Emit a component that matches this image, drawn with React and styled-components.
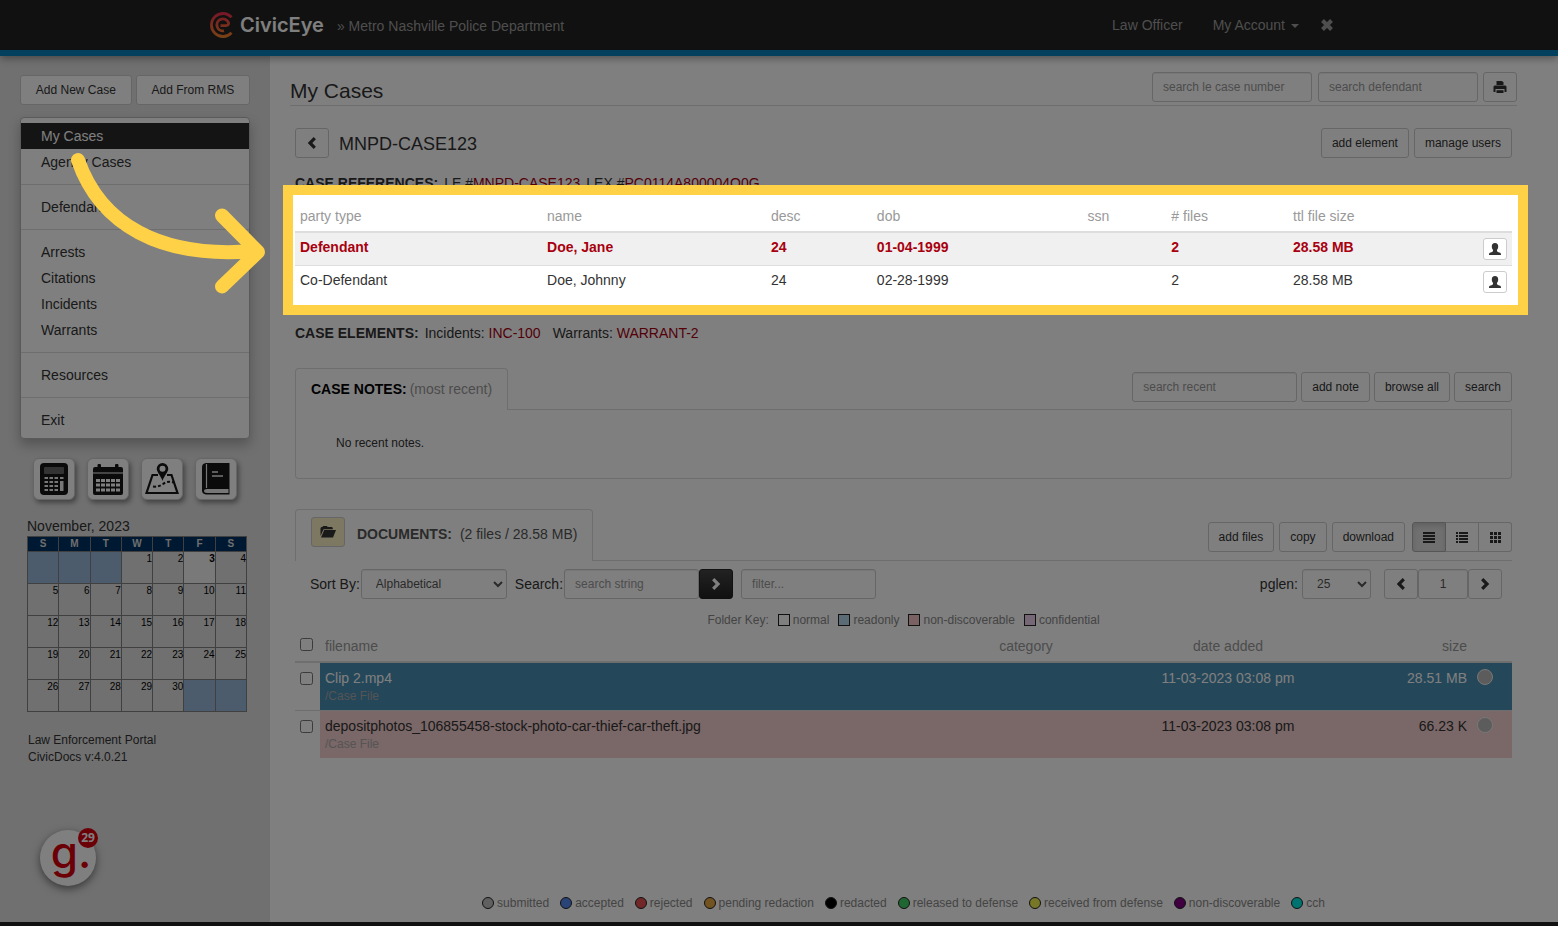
import React from "react";
import styled, { createGlobalStyle } from "styled-components";

const GlobalStyle = createGlobalStyle`
  *, *::before {
    box-sizing: border-box;
  }
  body {
    margin: 0;
    background: #fff;
    color: #333;
    font-family: "Liberation Sans", Arial, sans-serif;
    font-size: 14px;
    line-height: 20px;
  }
  button, input, select {
    font-family: inherit;
  }
`;

// data
const menuGroups = [
  ["My Cases", "Agency Cases"],
  ["Defendants"],
  ["Arrests", "Citations", "Incidents", "Warrants"],
  ["Resources"],
  ["Exit"],
];

const weekDays = ["S", "M", "T", "W", "T", "F", "S"];

const weeks = [
  [null, null, null, 1, 2, 3, 4],
  [5, 6, 7, 8, 9, 10, 11],
  [12, 13, 14, 15, 16, 17, 18],
  [19, 20, 21, 22, 23, 24, 25],
  [26, 27, 28, 29, 30, null, null],
];

const parties = [
  {
    type: "Defendant",
    name: "Doe, Jane",
    desc: "24",
    dob: "01-04-1999",
    files: 2,
    size: "28.58 MB",
    active: true,
  },
  {
    type: "Co-Defendant",
    name: "Doe, Johnny",
    desc: "24",
    dob: "02-28-1999",
    files: 2,
    size: "28.58 MB",
  },
];

const files = [
  {
    name: "Clip 2.mp4",
    path: "/Case File",
    added: "11-03-2023 03:08 pm",
    size: "28.51 MB",
    selected: true,
  },
  {
    name: "depositphotos_106855458-stock-photo-car-thief-car-theft.jpg",
    path: "/Case File",
    added: "11-03-2023 03:08 pm",
    size: "66.23 K",
  },
];

const folderKeys = [
  { label: "normal", color: "#fff" },
  { label: "readonly", color: "#b8d8ee" },
  { label: "non-discoverable", color: "#f4c4c4" },
  { label: "confidential", color: "#ecd0ec" },
];

const statuses = [
  { label: "submitted", color: "#c0c0c0" },
  { label: "accepted", color: "#5588ee" },
  { label: "rejected", color: "#e45050" },
  { label: "pending redaction", color: "#e6a640" },
  { label: "redacted", color: "#000" },
  { label: "released to defense", color: "#40cc66" },
  { label: "received from defense", color: "#eeee50" },
  { label: "non-discoverable", color: "#800080" },
  { label: "cch", color: "#00e6e0" },
];

// icons and svg
const Chevron = ({ right }) => (
  <svg width="12" height="12" viewBox="0 0 12 12" aria-hidden="true">
    <path
      d={right ? "M3.2 1.2 8 6l-4.8 4.8" : "M8.8 1.2 4 6l4.8 4.8"}
      fill="none"
      stroke="currentColor"
      strokeWidth="3.2"
    />
  </svg>
);

const PrintIcon = () => (
  <svg width="14" height="13" viewBox="0 0 14 13" fill="currentColor" aria-hidden="true">
    <path d="M4 0h5l1.5 1.5V4h-7V.5z" />
    <path d="M1.500 4.500h11l1 1V11h-2V8h-9v3h-2V5.500z" />
    <path d="M3.500 9.200h7V12h-7z" />
  </svg>
);

const CloseIcon = () => (
  <svg width="14" height="14" viewBox="0 0 14 14" aria-hidden="true">
    <path d="m2.500 2.500 9 9m0-9-9 9" stroke="currentColor" strokeWidth="4" />
  </svg>
);

const UserIcon = () => (
  <svg width="12" height="12" viewBox="0 0 12 12" fill="currentColor" aria-hidden="true">
    <path d="M6 0c2.200 0 3.200 1.300 3.200 3.200 0 1.700-.5 2.800-1.200 3.600-.2 1.200.1 1.800.9 2.200l2.200.8c.7.400.9.900.9 2.200H0c0-1.300.2-1.800.9-2.200L3.100 9c.8-.4 1.100-1 .9-2.200C3.300 6 2.800 4.900 2.800 3.200 2.800 1.300 3.800 0 6 0z" />
  </svg>
);

const FolderIcon = () => (
  <svg width="16" height="12" viewBox="0 0 16 12" fill="currentColor" aria-hidden="true">
    <path d="M.5 10V2l1-1h1L3 0h4l.6 1H12l.8 1v1.200H3.500z" />
    <path d="M4.200 4H16l-3 7.500H1z" />
  </svg>
);

const JustifyIcon = () => (
  <svg width="12" height="11" viewBox="0 0 12 11" fill="currentColor" aria-hidden="true">
    <path d="M0 0h12v2H0zM0 3h12v2H0zM0 6h12v2H0zM0 9h12v2H0z" />
  </svg>
);

const ListIcon = () => (
  <svg width="12" height="11" viewBox="0 0 12 11" fill="currentColor" aria-hidden="true">
    <path d="M0 0h2v2H0zM0 3h2v2H0zM0 6h2v2H0zM0 9h2v2H0zM3 0h9v2H3zM3 3h9v2H3zM3 6h9v2H3zM3 9h9v2H3z" />
  </svg>
);

const GridIcon = () => (
  <svg width="11" height="11" viewBox="0 0 11 11" fill="currentColor" aria-hidden="true">
    <path d="M0 0h3v3H0zM4 0h3v3H4zM8 0h3v3H8zM0 4h3v3H0zM4 4h3v3H4zM8 4h3v3H8zM0 8h3v3H0zM4 8h3v3H4zM8 8h3v3H8z" />
  </svg>
);

const LogoMark = () => (
  <svg width="26" height="28" viewBox="0 0 26 28" fill="none" aria-hidden="true">
    <defs>
      <linearGradient id="mark" x1="0" y1="0" x2="0" y2="28" gradientUnits="userSpaceOnUse">
        <stop offset="0" stopColor="#f02850" />
        <stop offset="1" stopColor="#f08a28" />
      </linearGradient>
    </defs>
    <g stroke="url(#mark)" strokeWidth="2.800">
      <path d="M22.500 6.300A11.500 11.500 0 1 0 22.500 21.700" />
      <path d="M11.500 14.600H17c3 0 3-2.400 1.800-4.200A6 6 0 1 0 15 19.800" />
    </g>
  </svg>
);

const CalculatorIcon = () => (
  <svg width="28" height="32" viewBox="0 0 28 32" aria-hidden="true">
    <rect width="28" height="32" rx="4" fill="#161616" />
    <rect x="4" y="4" width="20" height="7" rx="1" fill="#666" />
    <path
      fill="#eee"
      d="M4.500 14h3.500v2H4.500zM9.500 14h3.500v2H9.500zM14.500 14h3.500v2h-3.500zM20 14h3.500v2H20zM4.500 18h3.500v2H4.500zM9.500 18h3.500v2H9.500zM14.500 18h3.500v2h-3.500zM4.500 22h3.500v2H4.500zM9.500 22h3.500v2H9.500zM14.500 22h3.500v2h-3.500zM4.500 26h3.500v2H4.500zM9.500 26h3.500v2H9.500zM14.500 26h3.500v2h-3.500zM20 18h3.500v10H20z"
    />
  </svg>
);

const CalendarIcon = () => (
  <svg width="30" height="31" viewBox="0 0 30 31" fill="#161616" aria-hidden="true">
    <path d="M2 3h2.500V1.500A1.500 1.500 0 0 1 8 1.500V3h14V1.500a1.500 1.500 0 0 1 3.500 0V3H28q2 0 2 2v3.500H0V5q0-2 2-2z" />
    <path
      fillRule="evenodd"
      d="M0 9.500h30V29q0 2-2 2H2q-2 0-2-2zM3 15v3h4v-3zM8 15v3h4v-3zM13 15v3h4v-3zM18 15v3h4v-3zM23 15v3h4v-3zM3 19.500v3h4v-3zM8 19.500v3h4v-3zM13 19.500v3h4v-3zM18 19.500v3h4v-3zM23 19.500v3h4v-3zM3 24.500v3h4v-3zM8 24.500v3h4v-3zM13 24.500v3h4v-3zM18 24.500v3h4v-3zM23 24.500v3h4v-3z"
    />
  </svg>
);

const MapIcon = () => (
  <svg width="34" height="32" viewBox="0 0 34 32" aria-hidden="true">
    <path
      d="M13 12H7.500L1.500 30h31l-6-18H22"
      fill="none"
      stroke="#161616"
      strokeWidth="2.200"
    />
    <path
      d="M8 23.500c4 .5 7-.5 10-2.500s6-3 10.500-1.500"
      fill="none"
      stroke="#161616"
      strokeWidth="2"
      strokeDasharray="3 2"
    />
    <path
      fillRule="evenodd"
      fill="#161616"
      d="M17.500 0a5.800 5.800 0 0 1 5.800 5.800c0 3.200-4.300 7.200-5.800 12.200-1.500-5-5.800-9-5.800-12.200A5.800 5.800 0 0 1 17.500 0zm0 2.800a3 3 0 1 0 0 6 3 3 0 0 0 0-6z"
    />
  </svg>
);

const BookIcon = () => (
  <svg width="28" height="32" viewBox="0 0 28 32" aria-hidden="true">
    <path d="M4 0h23.500v31.500H4q-4-.5-4-4V4q0-3.500 4-4z" fill="#161616" />
    <path d="M4.500 1v24" stroke="#eee" strokeWidth="1.200" />
    <path d="M26.500 26H5q-3 .2-3 2t3 2h21.500z" fill="#eee" />
    <path d="M10 9h6M10 13h11" stroke="#eee" strokeWidth="1.500" />
  </svg>
);

const App = () => {
  return (
    <Page>
      <GlobalStyle />
      <TopBar>
        <TopInner>
          <Brand href="#">
            <LogoMark />
            <span>CivicEye</span>
          </Brand>
          <Agency>» Metro Nashville Police Department</Agency>
          <TopNav>
            <a href="#">Law Officer</a>
            <a href="#">
              My Account <Caret />
            </a>
            <a href="#" aria-label="Log out">
              <CloseIcon />
            </a>
          </TopNav>
        </TopInner>
      </TopBar>
      <Body>
        <Sidebar>
          <QuickActions>
            <Button $wide>Add New Case</Button>
            <Button $wide>Add From RMS</Button>
          </QuickActions>
          <Menu>
            {menuGroups.map((group, index) => (
              <MenuGroup key={index}>
                {group.map((item) => (
                  <MenuLink href="#" key={item} $active={item === "My Cases"}>
                    {item}
                  </MenuLink>
                ))}
              </MenuGroup>
            ))}
          </Menu>
          <Tiles>
            <Tile aria-label="Calculator">
              <CalculatorIcon />
            </Tile>
            <Tile aria-label="Calendar">
              <CalendarIcon />
            </Tile>
            <Tile aria-label="Map">
              <MapIcon />
            </Tile>
            <Tile aria-label="Statutes">
              <BookIcon />
            </Tile>
          </Tiles>
          <Calendar>
            <caption>November, 2023</caption>
            <thead>
              <tr>
                {weekDays.map((day, index) => (
                  <th key={index}>{day}</th>
                ))}
              </tr>
            </thead>
            <tbody>
              {weeks.map((week, index) => (
                <tr key={index}>
                  {week.map((day, i) => (
                    <Day key={i} $empty={!day} $today={day === 3}>
                      {day}
                    </Day>
                  ))}
                </tr>
              ))}
            </tbody>
          </Calendar>
          <Version>
            Law Enforcement Portal
            <br />
            CivicDocs v:4.0.21
          </Version>
        </Sidebar>
        <Main>
          <PageHead>
            <h1>My Cases</h1>
            <Controls>
              <SearchForm>
                <Input $width={160} placeholder="search le case number" aria-label="search le case number" />
                <Input $width={160} placeholder="search defendant" aria-label="search defendant" />
              </SearchForm>
              <IconButton aria-label="Print">
                <PrintIcon />
              </IconButton>
            </Controls>
          </PageHead>
          <Content>
            <CaseHead>
              <IconButton aria-label="Back">
                <Chevron />
              </IconButton>
              <h2>MNPD-CASE123</h2>
              <Controls>
                <Button>add element</Button>
                <Button>manage users</Button>
              </Controls>
            </CaseHead>
            <InfoLine>
              <b>CASE REFERENCES:</b>
              <span>
                LE #<a href="#">MNPD-CASE123</a>
              </span>
              <span>
                LEX #<a href="#">PC0114A800004O0G</a>
              </span>
            </InfoLine>

            <Spotlight>
              <PartyTable>
                <colgroup>
                  <col width="20.3%" />
                  <col width="18.4%" />
                  <col width="8.7%" />
                  <col width="17.3%" />
                  <col width="6.9%" />
                  <col width="10%" />
                  <col width="14.4%" />
                  <col />
                </colgroup>
                <thead>
                  <tr>
                    <th>party type</th>
                    <th>name</th>
                    <th>desc</th>
                    <th>dob</th>
                    <th>ssn</th>
                    <th># files</th>
                    <th>ttl file size</th>
                    <th></th>
                  </tr>
                </thead>
                <tbody>
                  {parties.map((party) => (
                    <PartyRow key={party.name} $active={party.active}>
                      <td>{party.type}</td>
                      <td>{party.name}</td>
                      <td>{party.desc}</td>
                      <td>{party.dob}</td>
                      <td></td>
                      <td>{party.files}</td>
                      <td>{party.size}</td>
                      <td>
                        <SmallButton aria-label={`Profile of ${party.name}`}>
                          <UserIcon />
                        </SmallButton>
                      </td>
                    </PartyRow>
                  ))}
                </tbody>
              </PartyTable>
            </Spotlight>

            <InfoLine $spaced>
              <b>CASE ELEMENTS:</b>
              <span>
                Incidents: <a href="#">INC-100</a>
              </span>
              <span>
                Warrants: <a href="#">WARRANT-2</a>
              </span>
            </InfoLine>

            <Section>
              <TabBar>
                <Tab>
                  <NotesTitle>CASE NOTES:</NotesTitle>
                  <Muted>(most recent)</Muted>
                </Tab>
                <TabControls>
                  <Input $width={165} placeholder="search recent" aria-label="search recent" />
                  <Button>add note</Button>
                  <Button>browse all</Button>
                  <Button>search</Button>
                </TabControls>
              </TabBar>
              <NotesPanel>No recent notes.</NotesPanel>
            </Section>

            <Section>
              <TabBar>
                <Tab $compact>
                  <FolderButton aria-label="Open folder">
                    <FolderIcon />
                  </FolderButton>
                  <DocsTitle>DOCUMENTS:</DocsTitle>
                  <span>(2 files / 28.58 MB)</span>
                </Tab>
                <TabControls $loose>
                  <Button>add files</Button>
                  <Button>copy</Button>
                  <Button>download</Button>
                  <ViewSwitch>
                    <ViewButton $active aria-label="Lines">
                      <JustifyIcon />
                    </ViewButton>
                    <ViewButton aria-label="List">
                      <ListIcon />
                    </ViewButton>
                    <ViewButton aria-label="Grid">
                      <GridIcon />
                    </ViewButton>
                  </ViewSwitch>
                </TabControls>
              </TabBar>
              <FilterBar>
                <label htmlFor="sort">Sort By:</label>
                <Select id="sort" $width={146} defaultValue="Alphabetical">
                  <option>Alphabetical</option>
                </Select>
                <SearchLabel htmlFor="docsearch">Search:</SearchLabel>
                <Input id="docsearch" $width={135} placeholder="search string" />
                <DarkButton aria-label="Run search">
                  <Chevron right />
                </DarkButton>
                <FilterInput $width={135} placeholder="filter..." aria-label="filter" />
                <Pager>
                  <label htmlFor="pglen">pglen:</label>
                  <Select id="pglen" $width={69} defaultValue="25">
                    <option>25</option>
                  </Select>
                  <PageNav>
                    <IconButton aria-label="Previous page">
                      <Chevron />
                    </IconButton>
                    <PageInput $width={50} defaultValue="1" aria-label="Page" />
                    <IconButton aria-label="Next page">
                      <Chevron right />
                    </IconButton>
                  </PageNav>
                </Pager>
              </FilterBar>
              <FolderKey>
                <span>Folder Key:</span>
                {folderKeys.map((key) => (
                  <KeyItem key={key.label} $color={key.color}>
                    {key.label}
                  </KeyItem>
                ))}
              </FolderKey>
              <FileTable>
                <colgroup>
                  <col width="25" />
                  <col />
                  <col width="228" />
                  <col width="176" />
                  <col width="156" />
                  <col width="40" />
                </colgroup>
                <thead>
                  <tr>
                    <th>
                      <Checkbox aria-label="Select all files" />
                    </th>
                    <th>filename</th>
                    <th>category</th>
                    <th>date added</th>
                    <th>size</th>
                    <th></th>
                  </tr>
                </thead>
                <tbody>
                  {files.map((file) => (
                    <FileRow key={file.name} $selected={file.selected}>
                      <td>
                        <Checkbox aria-label={`Select ${file.name}`} />
                      </td>
                      <td>
                        {file.name}
                        <FilePath>{file.path}</FilePath>
                      </td>
                      <td></td>
                      <td>{file.added}</td>
                      <td>{file.size}</td>
                      <td>
                        <StatusDot />
                      </td>
                    </FileRow>
                  ))}
                </tbody>
              </FileTable>
            </Section>

            <Legend>
              {statuses.map((status) => (
                <KeyItem key={status.label} $color={status.color} $round>
                  {status.label}
                </KeyItem>
              ))}
            </Legend>
          </Content>
        </Main>
      </Body>
      <BottomBar />
      <HelpButton aria-label="Help">
        g.
        <HelpCount>29</HelpCount>
      </HelpButton>
      <Arrow width="204" height="152" viewBox="0 0 204 152" aria-hidden="true">
        <path d="M14 14C36 78 96 113 190 105" />
        <path d="M158 69.500 194 106l-36 34.500" />
      </Arrow>
    </Page>
  );
};

const Page = styled.div`
  position: relative;
  display: flex;
  flex-direction: column;
  min-height: 100vh;
  overflow: hidden;
`;

// top bar
const TopBar = styled.header`
  background: #222;
  border-bottom: 6px solid #0780bd;
  box-shadow: 0 2px 8px rgba(0, 0, 0, 0.4);
  position: relative;
`;

const TopInner = styled.div`
  display: flex;
  align-items: center;
  max-width: 1170px;
  height: 50px;
  margin: 0 auto;
  padding: 0 15px;
`;

const Brand = styled.a`
  display: flex;
  align-items: center;
  gap: 5px;
  color: #fff;
  font-family: Inter, sans-serif;
  font-size: 20px;
  font-weight: 600;
  text-decoration: none;
`;

const Agency = styled.div`
  margin-left: 13px;
  padding-top: 2px;
  color: #9d9d9d;
`;

const TopNav = styled.nav`
  display: flex;
  align-items: center;
  margin-left: auto;
  a {
    display: flex;
    align-items: center;
    padding: 0 15px;
    color: #9d9d9d;
    text-decoration: none;
  }
  a:last-child {
    padding-left: 6px;
  }
`;

const Caret = styled.i`
  margin: 2px 0 0 6px;
  border-top: 4px solid;
  border-right: 4px solid transparent;
  border-left: 4px solid transparent;
`;

const Body = styled.div`
  display: flex;
  flex: 1;
`;

// buttons and fields
const Button = styled.button`
  height: 30px;
  padding: 0 ${({ $wide }) => ($wide ? 14 : 10)}px;
  border: 1px solid #ccc;
  border-radius: 3px;
  background: #fff;
  color: #333;
  font-size: 12px;
  line-height: 18px;
  white-space: nowrap;
`;

const IconButton = styled(Button)`
  display: flex;
  align-items: center;
  justify-content: center;
  width: 34px;
  padding: 0;
`;

const DarkButton = styled(IconButton)`
  border-color: #222;
  background: linear-gradient(#444, #222);
  color: #fff;
`;

const FolderButton = styled(IconButton)`
  background: #fbf0c4;
`;

const SmallButton = styled(IconButton)`
  width: 24px;
  height: 22px;
`;

const Input = styled.input`
  width: ${({ $width }) => $width}px;
  height: 30px;
  padding: 5px 10px;
  border: 1px solid #ccc;
  border-radius: 3px;
  background: #fff;
  box-shadow: inset 0 1px 1px rgba(0, 0, 0, 0.075);
  color: #555;
  font-size: 12px;
  &::placeholder {
    color: #999;
  }
`;

const Select = styled.select`
  width: ${({ $width }) => $width}px;
  height: 30px;
  padding: 0 0 0 10px;
  border: 1px solid #ccc;
  border-radius: 3px;
  background: #fff;
  box-shadow: inset 0 1px 1px rgba(0, 0, 0, 0.075);
  color: #555;
  font-size: 12px;
`;

const Checkbox = styled.input.attrs({ type: "checkbox" })`
  display: block;
  width: 13px;
  height: 13px;
  margin: 2px 0 0;
`;

const Controls = styled.div`
  display: flex;
  gap: 5px;
`;

const SearchForm = styled.div`
  display: flex;
  gap: 6px;
`;

// sidebar
const Sidebar = styled.aside`
  flex: none;
  width: 270px;
  padding: 19px 20px 0;
  background: #e0e0e0;
`;

const QuickActions = styled.div`
  display: flex;
  gap: 4px;
  button {
    flex: 1 1 auto;
  }
`;

const Menu = styled.nav`
  margin-top: 12px;
  padding: 5px 0;
  border: 1px solid #b4b4b4;
  border-radius: 4px;
  background: #fff;
  box-shadow: 0 6px 12px rgba(0, 0, 0, 0.25);
`;

const MenuGroup = styled.div`
  & + & {
    margin-top: 9px;
    padding-top: 9px;
    border-top: 1px solid #ddd;
  }
`;

const MenuLink = styled.a`
  display: block;
  padding: 3px 20px;
  background: ${({ $active }) => ($active ? "#282828" : "transparent")};
  color: ${({ $active }) => ($active ? "#fff" : "#333")};
  text-decoration: none;
`;

const Tiles = styled.div`
  display: flex;
  gap: 12px;
  margin: 19px 13px 0;
`;

const Tile = styled.button`
  display: flex;
  align-items: center;
  justify-content: center;
  width: 42px;
  height: 42px;
  padding: 0;
  border: 1px solid #ccc;
  border-radius: 6px;
  background: #fff;
  box-shadow: 2px 3px 5px rgba(0, 0, 0, 0.4);
`;

const Calendar = styled.table`
  width: 220px;
  margin: 16px 7px 0;
  border-collapse: collapse;
  table-layout: fixed;
  font-size: 10px;
  line-height: 14px;
  caption {
    font-size: 14px;
    line-height: 20px;
    text-align: left;
  }
  th {
    height: 15px;
    padding: 0;
    border: 1px solid #808080;
    background: #036;
    color: #ddd;
  }
`;

const Day = styled.td`
  height: 32px;
  padding: 0;
  border: 1px solid #808080;
  background: ${({ $empty, $today }) =>
    $empty ? "#99b9db" : $today ? "#f2f2f2" : "transparent"};
  color: #000;
  font-weight: ${({ $today }) => ($today ? "bold" : "normal")};
  text-align: right;
  vertical-align: top;
`;

const Version = styled.p`
  margin: 20px 8px 0;
  font-size: 12px;
  line-height: 17px;
`;

// main column
const Main = styled.main`
  display: flex;
  flex: 1;
  flex-direction: column;
  min-width: 0;
  padding: 16px 41px 0 20px;
`;

const PageHead = styled.div`
  display: flex;
  align-items: flex-start;
  justify-content: space-between;
  padding-bottom: 3px;
  border-bottom: 1px solid #ddd;
  h1 {
    margin: 7px 0 0;
    font-size: 21px;
    font-weight: normal;
    line-height: 23px;
  }
`;

const Content = styled.div`
  display: flex;
  flex: 1;
  flex-direction: column;
  padding: 22px 5px 0;
`;

const CaseHead = styled.div`
  display: flex;
  align-items: center;
  margin-bottom: 15px;
  h2 {
    flex: 1;
    margin: 2px 0 0 10px;
    font-size: 18px;
    font-weight: normal;
    line-height: 26px;
  }
`;

const InfoLine = styled.div`
  b {
    margin-right: 6px;
  }
  span {
    margin-right: ${({ $spaced }) => ($spaced ? 12 : 6)}px;
  }
  a {
    color: #a8000f;
    text-decoration: none;
  }
`;

// lit frame, its shadow dims the rest of the page
const Spotlight = styled.div`
  position: relative;
  z-index: 10;
  margin: -8px -16px 8px -12px;
  padding: 6px 6px 7px 2px;
  border: 10px solid #ffd147;
  background: #fff;
  box-shadow: 0 0 0 4000px rgba(0, 0, 0, 0.5);
`;

const PartyTable = styled.table`
  width: 100%;
  border-collapse: collapse;
  table-layout: fixed;
  th {
    padding: 5px;
    border-bottom: 2px solid #ddd;
    color: #999;
    font-weight: normal;
    text-align: left;
  }
`;

const PartyRow = styled.tr`
  background: ${({ $active }) => ($active ? "#f0f0f0" : "#fff")};
  color: ${({ $active }) => ($active ? "#a8000f" : "#333")};
  font-weight: ${({ $active }) => ($active ? "bold" : "normal")};
  line-height: 18px;
  & + & {
    border-top: 1px solid #ddd;
  }
  td {
    padding: 5px;
    vertical-align: top;
  }
  button {
    margin-left: auto;
  }
`;

const Section = styled.section`
  & + & {
    margin-top: 30px;
  }
  ${InfoLine} + & {
    margin-top: 25px;
  }
`;

const TabBar = styled.div`
  display: flex;
  align-items: flex-end;
  justify-content: space-between;
  border-bottom: 1px solid #ddd;
`;

const TabControls = styled.div`
  display: flex;
  gap: ${({ $loose }) => ($loose ? 5 : 4)}px;
  margin-bottom: ${({ $loose }) => ($loose ? 8 : 7)}px;
`;

const Tab = styled.div`
  display: flex;
  align-items: ${({ $compact }) => ($compact ? "flex-end" : "center")};
  margin-bottom: -1px;
  padding: ${({ $compact }) => ($compact ? "7px 15px 14px" : "10px 15px 11px")};
  border: 1px solid #ddd;
  border-bottom: 0;
  border-radius: 4px 4px 0 0;
  background: #fff;
  color: #555;
  span,
  b {
    padding-bottom: ${({ $compact }) => ($compact ? 3 : 0)}px;
  }
`;

const NotesTitle = styled.b`
  margin-right: 3px;
  color: #000;
`;

const DocsTitle = styled.b`
  margin: 0 8px 0 12px;
`;

const Muted = styled.span`
  color: #999;
`;

const NotesPanel = styled.div`
  padding: 24px 40px 26px;
  border: 1px solid #ddd;
  border-top: 0;
  border-radius: 0 0 4px 4px;
  font-size: 12px;
  line-height: 18px;
`;

const ViewSwitch = styled.div`
  display: flex;
  margin-left: 2px;
`;

const ViewButton = styled(IconButton)`
  background: ${({ $active }) => ($active ? "#e0e0e0" : "#fff")};
  border-color: ${({ $active }) => ($active ? "#adadad" : "#ccc")};
  box-shadow: ${({ $active }) =>
    $active ? "inset 0 3px 5px rgba(0, 0, 0, 0.125)" : "none"};
  border-radius: 0;
  &:first-child {
    border-radius: 3px 0 0 3px;
  }
  &:last-child {
    border-radius: 0 3px 3px 0;
  }
  & + & {
    width: 33px;
    border-left: 0;
  }
`;

const FilterBar = styled.div`
  display: flex;
  align-items: center;
  padding: 8px 10px 0 15px;
  label {
    margin-right: 1px;
  }
`;

const SearchLabel = styled.label`
  margin-left: 8px;
`;

const FilterInput = styled(Input)`
  margin-left: 8px;
`;

const Pager = styled.div`
  display: flex;
  align-items: center;
  gap: 3px;
  margin-left: auto;
`;

const PageNav = styled.div`
  display: flex;
  margin-left: 10px;
`;

const PageInput = styled(Input)`
  text-align: center;
`;

const FolderKey = styled.div`
  display: flex;
  align-items: center;
  justify-content: center;
  gap: 9px;
  margin: 12px 0 2px;
  color: #888;
  font-size: 12px;
  line-height: 18px;
`;

const KeyItem = styled.span`
  display: flex;
  align-items: center;
  gap: 3px;
  &::before {
    content: "";
    width: 12px;
    height: 12px;
    border: 1px solid #222;
    border-radius: ${({ $round }) => ($round ? "50%" : "0")};
    background: ${({ $color }) => $color};
  }
`;

const FileTable = styled.table`
  width: 100%;
  border-collapse: collapse;
  table-layout: fixed;
  th {
    padding: 5px;
    border-bottom: 2px solid #ddd;
    color: #999;
    font-weight: normal;
    text-align: left;
    vertical-align: top;
  }
  th:nth-child(3),
  th:nth-child(4),
  td:nth-child(4) {
    text-align: center;
  }
  th:nth-child(5),
  td:nth-child(5) {
    text-align: right;
  }
`;

const FileRow = styled.tr`
  color: ${({ $selected }) => ($selected ? "#fff" : "#333")};
  & + & {
    border-top: 1px solid #ddd;
  }
  td {
    padding: 5px;
    background: ${({ $selected }) => ($selected ? "#488eb4" : "#f4cece")};
    vertical-align: top;
  }
  td:first-child {
    padding-top: 7px;
    background: #fff;
  }
`;

const FilePath = styled.div`
  color: #aaa;
  font-size: 12px;
  line-height: 17px;
`;

const StatusDot = styled.span`
  display: block;
  width: 16px;
  height: 16px;
  margin-top: 1px;
  border: 1px solid #eee;
  border-radius: 50%;
  background: #b8b8b8;
`;

const Legend = styled.footer`
  display: flex;
  align-items: center;
  justify-content: center;
  gap: 11px;
  margin-top: auto;
  padding-bottom: 10px;
  color: #888;
  font-size: 12px;
  line-height: 18px;
`;

const BottomBar = styled.div`
  height: 4px;
  background: #222;
`;

// floating help badge
const HelpButton = styled.button`
  position: absolute;
  bottom: 40px;
  left: 40px;
  width: 56px;
  height: 56px;
  padding: 0 0 12px 6px;
  border: 0;
  border-radius: 50%;
  background: #fff;
  box-shadow: 0 3px 8px rgba(0, 0, 0, 0.5);
  color: #d8000e;
  font-family: Inter, sans-serif;
  font-size: 44px;
  font-weight: 500;
  line-height: 42px;
`;

const HelpCount = styled.span`
  position: absolute;
  top: -2px;
  right: -2px;
  width: 20px;
  height: 20px;
  border-radius: 50%;
  background: #d8000e;
  color: #fff;
  font-family: "Open Sans", sans-serif;
  font-size: 12px;
  font-weight: 700;
  line-height: 20px;
`;

const Arrow = styled.svg`
  position: absolute;
  top: 146px;
  left: 64px;
  z-index: 11;
  fill: none;
  stroke: #ffd147;
  stroke-width: 14px;
  stroke-linecap: round;
  stroke-linejoin: round;
  pointer-events: none;
`;

export default App;
